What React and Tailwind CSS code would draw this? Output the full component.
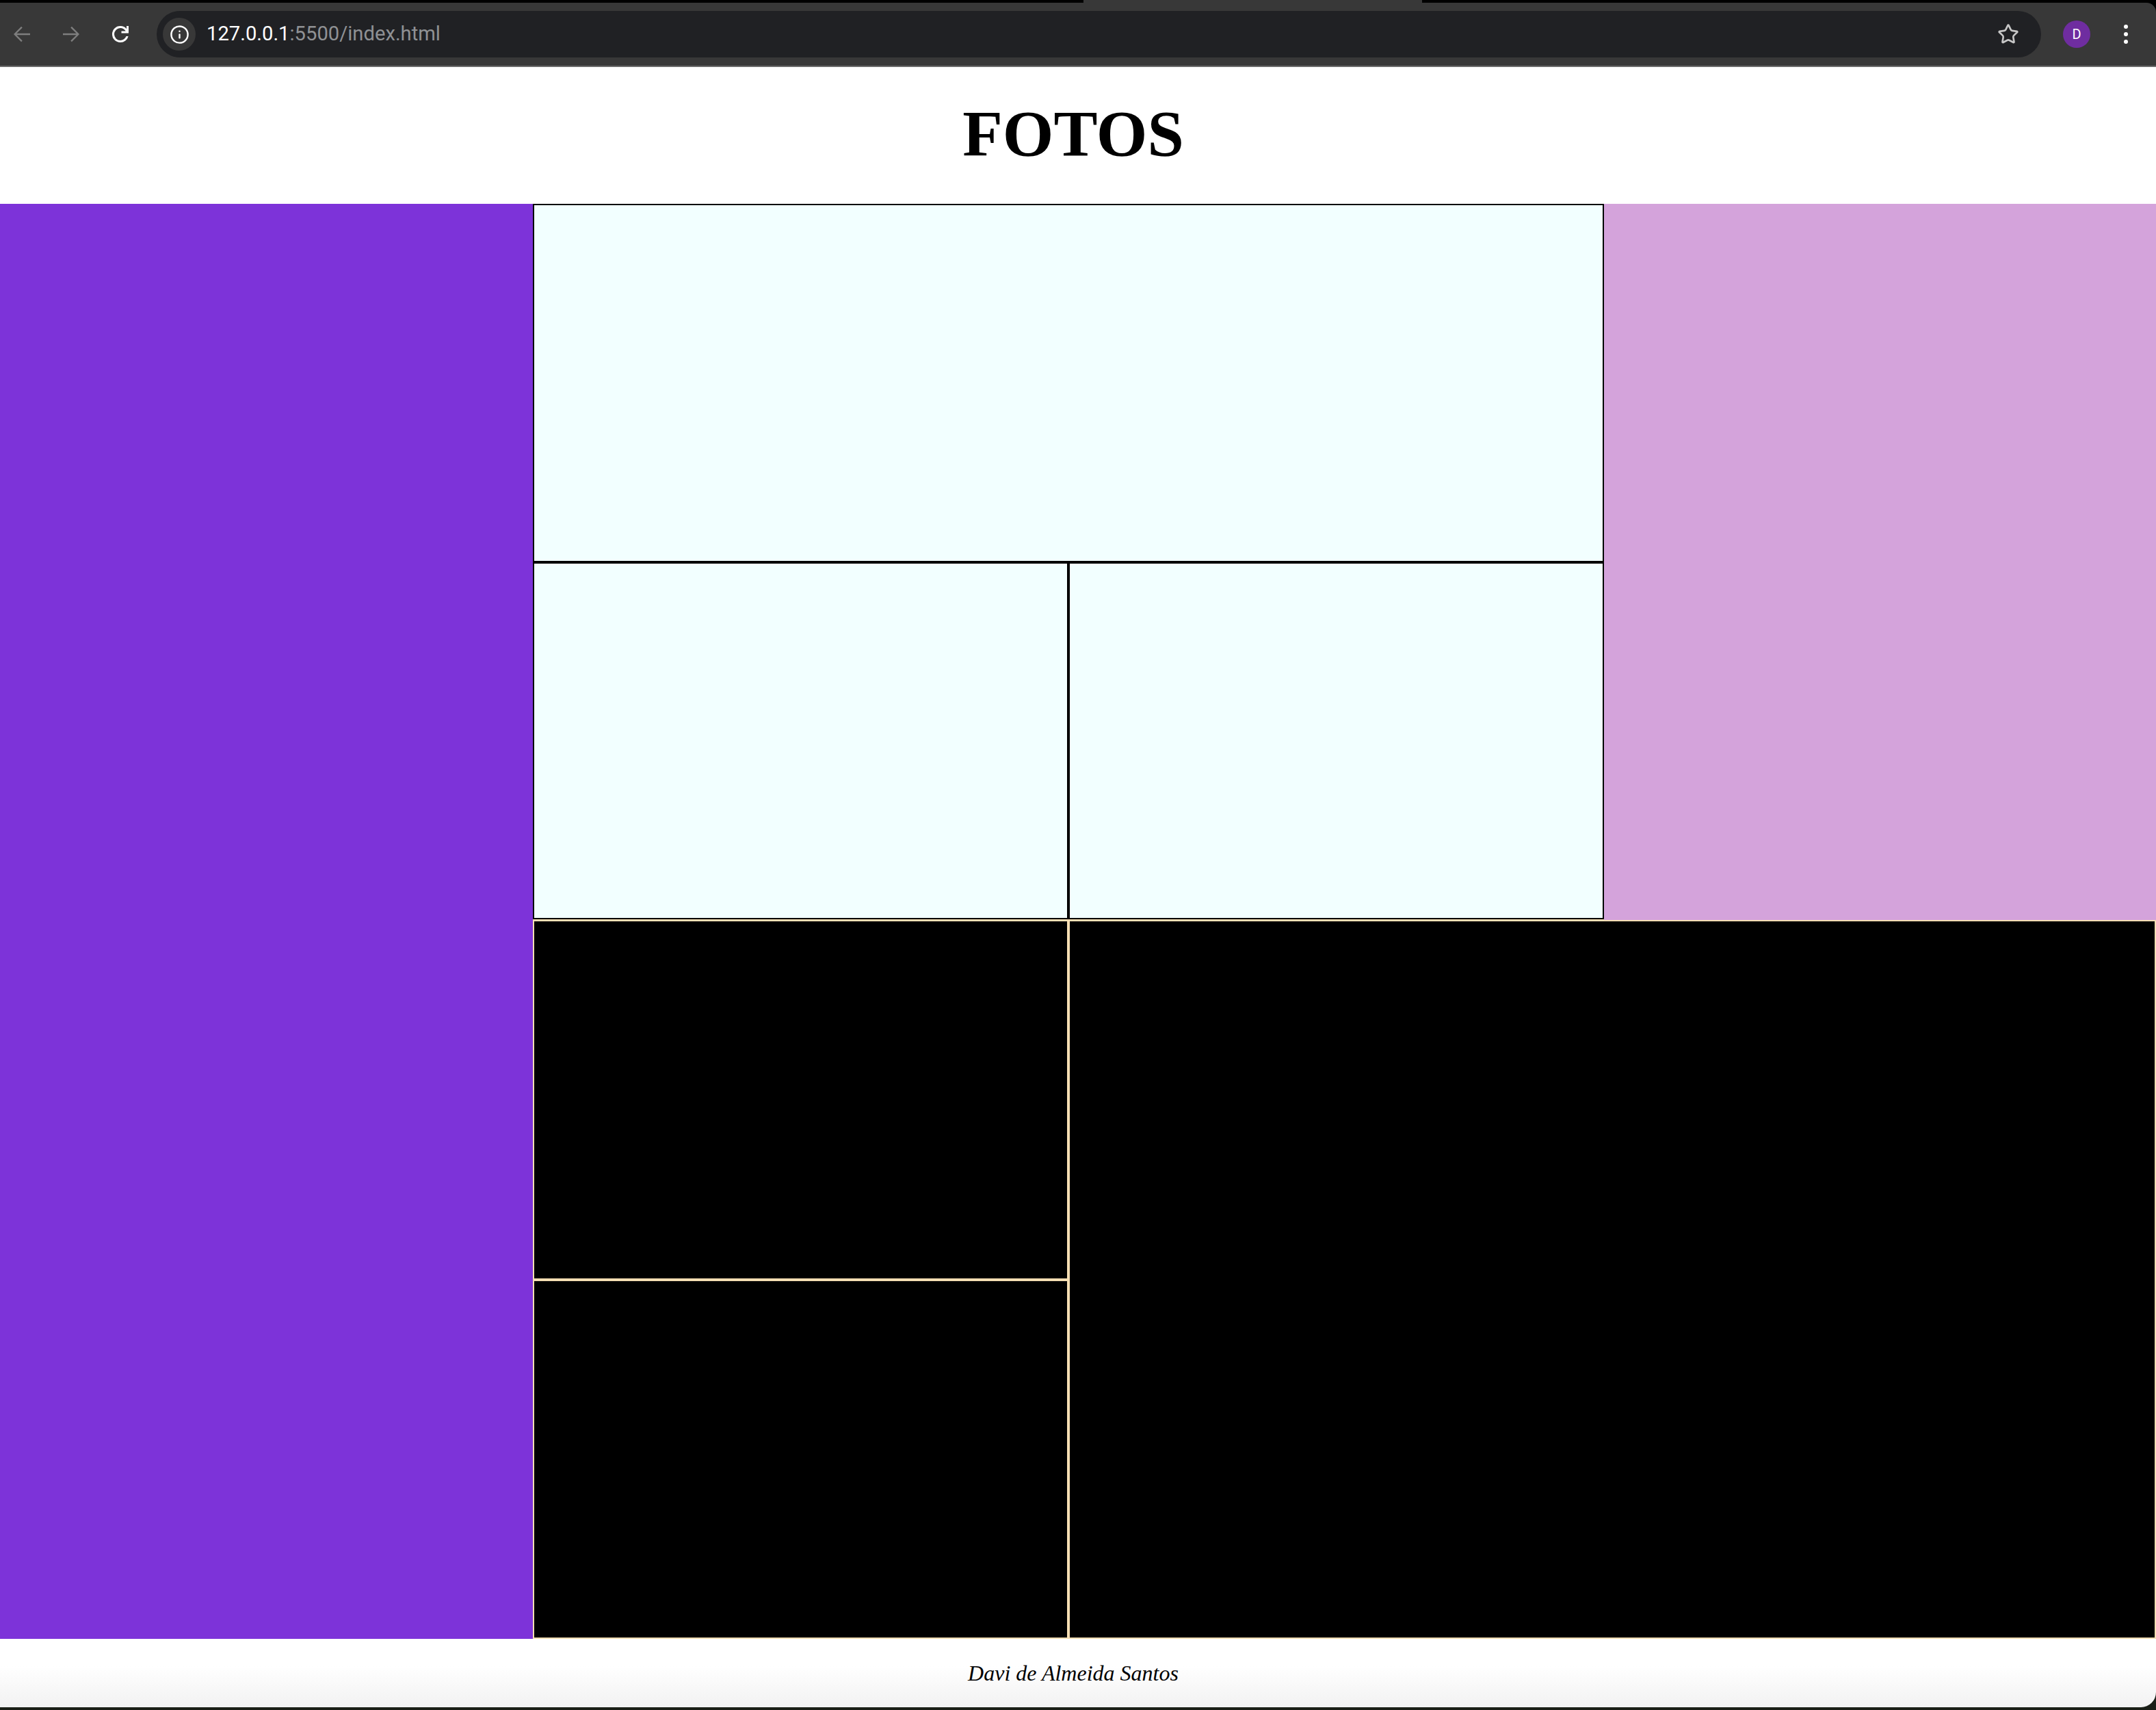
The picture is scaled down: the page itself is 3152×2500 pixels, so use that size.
import React from "react";
import { Info, Star } from "lucide-react";

function BackIcon({ flip }) {
  return (
    <svg viewBox="0 0 24 24" className={flip ? "w-9 h-9 rotate-180 text-[#7e7e7e]" : "w-9 h-9 text-[#7e7e7e]"} fill="currentColor">
      <path d="M20 11.2H6.9l5.6-5.6L11.4 4.5 4 12l7.4 7.5 1.1-1.1-5.6-5.6H20z" />
    </svg>
  );
}

function ReloadIcon() {
  return (
    <svg viewBox="0 0 24 24" className="w-9 h-9 text-white" fill="currentColor">
      <path d="M12 20q-3.35 0-5.675-2.325T4 12q0-3.35 2.325-5.675T12 4q1.725 0 3.3.712T18 6.75V4h2v7h-7V9h4.2q-.8-1.4-2.188-2.2T12 6Q9.5 6 7.75 7.75T6 12q0 2.5 1.75 4.25T12 18q1.925 0 3.475-1.1T17.65 14h2.1q-.7 2.65-2.85 4.325T12 20Z" />
    </svg>
  );
}

function BrowserBar() {
  return (
    <div className="bg-black">
      <div className="flex h-[4px]">
        <div className="w-[1584px] bg-black" />
        <div className="w-[495px] bg-[#383838]" />
      </div>
      <div className="h-[92px] bg-[#383838] rounded-tr-[14px] flex items-center pl-[14px] font-['Roboto',sans-serif]">
        <div className="flex items-center gap-[36px]">
          <BackIcon />
          <BackIcon flip />
          <ReloadIcon />
        </div>
        <div className="ml-[35px] w-[2755px] h-[68px] rounded-full bg-[#202124] flex items-center pl-[9px] pr-[32px]">
          <div className="w-[48px] h-[48px] rounded-full bg-[#383838] flex items-center justify-center">
            <Info size={29} strokeWidth={2} className="text-white" />
          </div>
          <div className="ml-[16px] text-[29.2px] leading-none text-[#8f9194]">
            <span className="text-white">127.0.0.1</span>:5500/index.html
          </div>
          <Star size={32} strokeWidth={2} className="ml-auto text-[#c7c7c7]" />
        </div>
        <div className="ml-[32px] w-[40px] h-[40px] rounded-full bg-[#6f2da0] text-white text-[20px] flex items-center justify-center">
          D
        </div>
        <div className="ml-[49px] flex flex-col gap-[5px]">
          <div className="w-[6px] h-[6px] rounded-full bg-white" />
          <div className="w-[6px] h-[6px] rounded-full bg-white" />
          <div className="w-[6px] h-[6px] rounded-full bg-white" />
        </div>
      </div>
      <div className="h-[2px] bg-[#6b6b6b]" />
    </div>
  );
}

export default function App() {
  return (
    <div className="w-[3152px] h-[2500px] flex flex-col bg-[#1a1f17] font-['Liberation_Serif',serif] overflow-hidden">
      <BrowserBar />
      <header className="h-[200px] bg-white flex items-center justify-center pr-[14px]">
        <h1 className="text-[96px] font-bold leading-none text-black -mt-[4px]">FOTOS</h1>
      </header>
      <main className="grid grid-cols-[779px_783px_783px_1fr] grid-rows-[524px_523px_526px_525px] bg-[#f5deb3]">
        <div className="row-span-4 bg-[#7d33d9]" />
        <div className="col-span-2 bg-[#f2ffff] border-2 border-black" />
        <div className="row-span-2 bg-[#d4a3db]" />
        <div className="bg-[#f2ffff] border-2 border-black mb-px" />
        <div className="bg-[#f2ffff] border-2 border-black mb-px" />
        <div className="bg-black border-2 border-[#f5deb3]" />
        <div className="col-span-2 row-span-2 bg-black border-2 border-[#f5deb3]" />
        <div className="bg-black border-2 border-[#f5deb3]" />
      </main>
      <footer className="h-[100px] bg-linear-to-b from-white from-40% to-[#f2f2f2] rounded-br-[22px] flex items-center justify-center pr-[14px]">
        <p className="text-[32px] italic text-black">Davi de Almeida Santos</p>
      </footer>
    </div>
  );
}
